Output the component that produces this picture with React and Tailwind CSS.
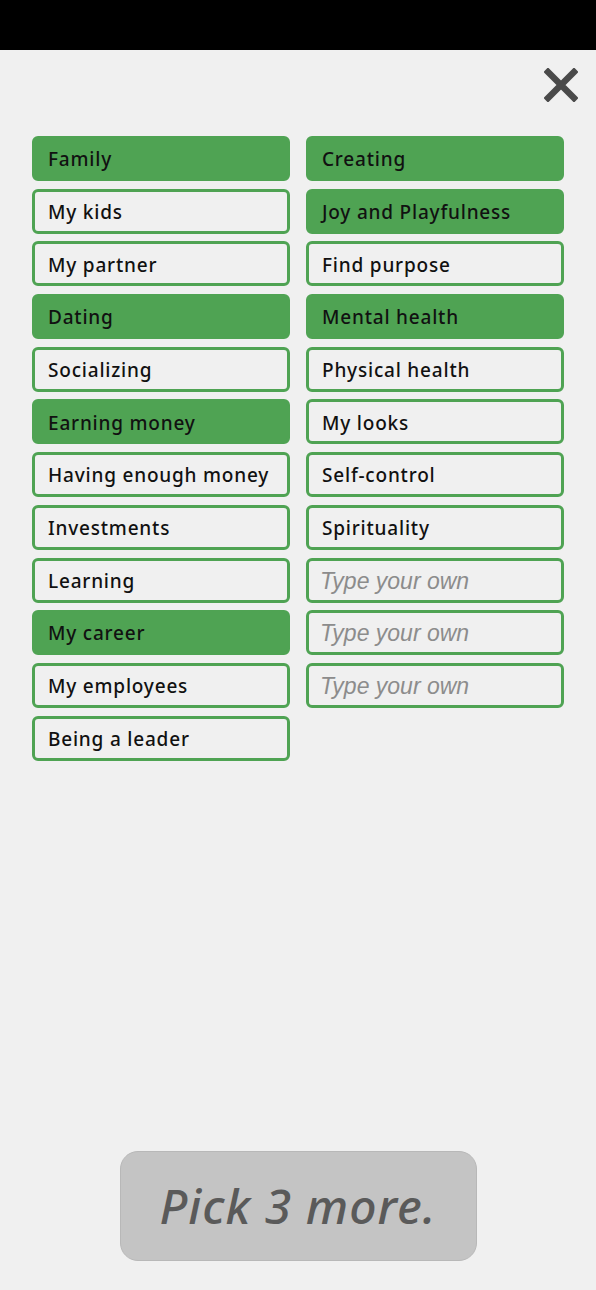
const left = [
  { label: "Family", on: true },
  { label: "My kids" },
  { label: "My partner" },
  { label: "Dating", on: true },
  { label: "Socializing" },
  { label: "Earning money", on: true },
  { label: "Having enough money" },
  { label: "Investments" },
  { label: "Learning" },
  { label: "My career", on: true },
  { label: "My employees" },
  { label: "Being a leader" },
];

const right = [
  { label: "Creating", on: true },
  { label: "Joy and Playfulness", on: true },
  { label: "Find purpose" },
  { label: "Mental health", on: true },
  { label: "Physical health" },
  { label: "My looks" },
  { label: "Self-control" },
  { label: "Spirituality" },
  { label: "Type your own", own: true },
  { label: "Type your own", own: true },
  { label: "Type your own", own: true },
];

function Chip({ label, on, own }) {
  if (own) {
    return (
      <div className="h-[45px] rounded-[6px] border-[3px] border-[#4fa353] flex items-center pl-[11px] pt-[2px]">
        <span className="text-[23px] italic text-[#8c8c8c] font-['Liberation_Sans',sans-serif]">
          {label}
        </span>
      </div>
    );
  }
  return (
    <div
      className={
        on
          ? "h-[45px] rounded-[6px] border-[3px] border-[#4fa353] bg-[#4fa353] flex items-center pl-[13px] pt-[2px]"
          : "h-[45px] rounded-[6px] border-[3px] border-[#4fa353] flex items-center pl-[13px] pt-[2px]"
      }
    >
      <span className="text-[19px] font-medium text-[#111] font-['Noto_Sans',sans-serif] tracking-[0.8px]">
        {label}
      </span>
    </div>
  );
}

export default function App() {
  return (
    <div className="w-[596px] h-[1290px] bg-[#f0f0f0] flex flex-col">
      <div className="h-[50px] bg-black shrink-0" />
      <div className="flex justify-end pr-[18px] pt-[18px]">
        <svg width="34" height="34" viewBox="0 0 34 34">
          <path d="M4 4 L30 30 M30 4 L4 30" stroke="#4a4a4a" strokeWidth="6.5" strokeLinecap="square" />
        </svg>
      </div>
      <div className="grid grid-cols-2 gap-x-[16px] px-[32px] mt-[34px]">
        <div className="flex flex-col gap-[7.7px]">
          {left.map((c, i) => (
            <Chip key={i} {...c} />
          ))}
        </div>
        <div className="flex flex-col gap-[7.7px]">
          {right.map((c, i) => (
            <Chip key={i} {...c} />
          ))}
        </div>
      </div>
      <div className="flex-1" />
      <div className="flex justify-center pb-[29px]">
        <div className="w-[357px] h-[110px] rounded-[18px] bg-[#c4c4c4] border border-[#b8b8b8] flex items-center justify-center">
          <span className="text-[48px] italic font-medium text-[#5a5a5a] font-['Noto_Sans',sans-serif] tracking-[1px]">
            Pick 3 more.
          </span>
        </div>
      </div>
    </div>
  );
}
